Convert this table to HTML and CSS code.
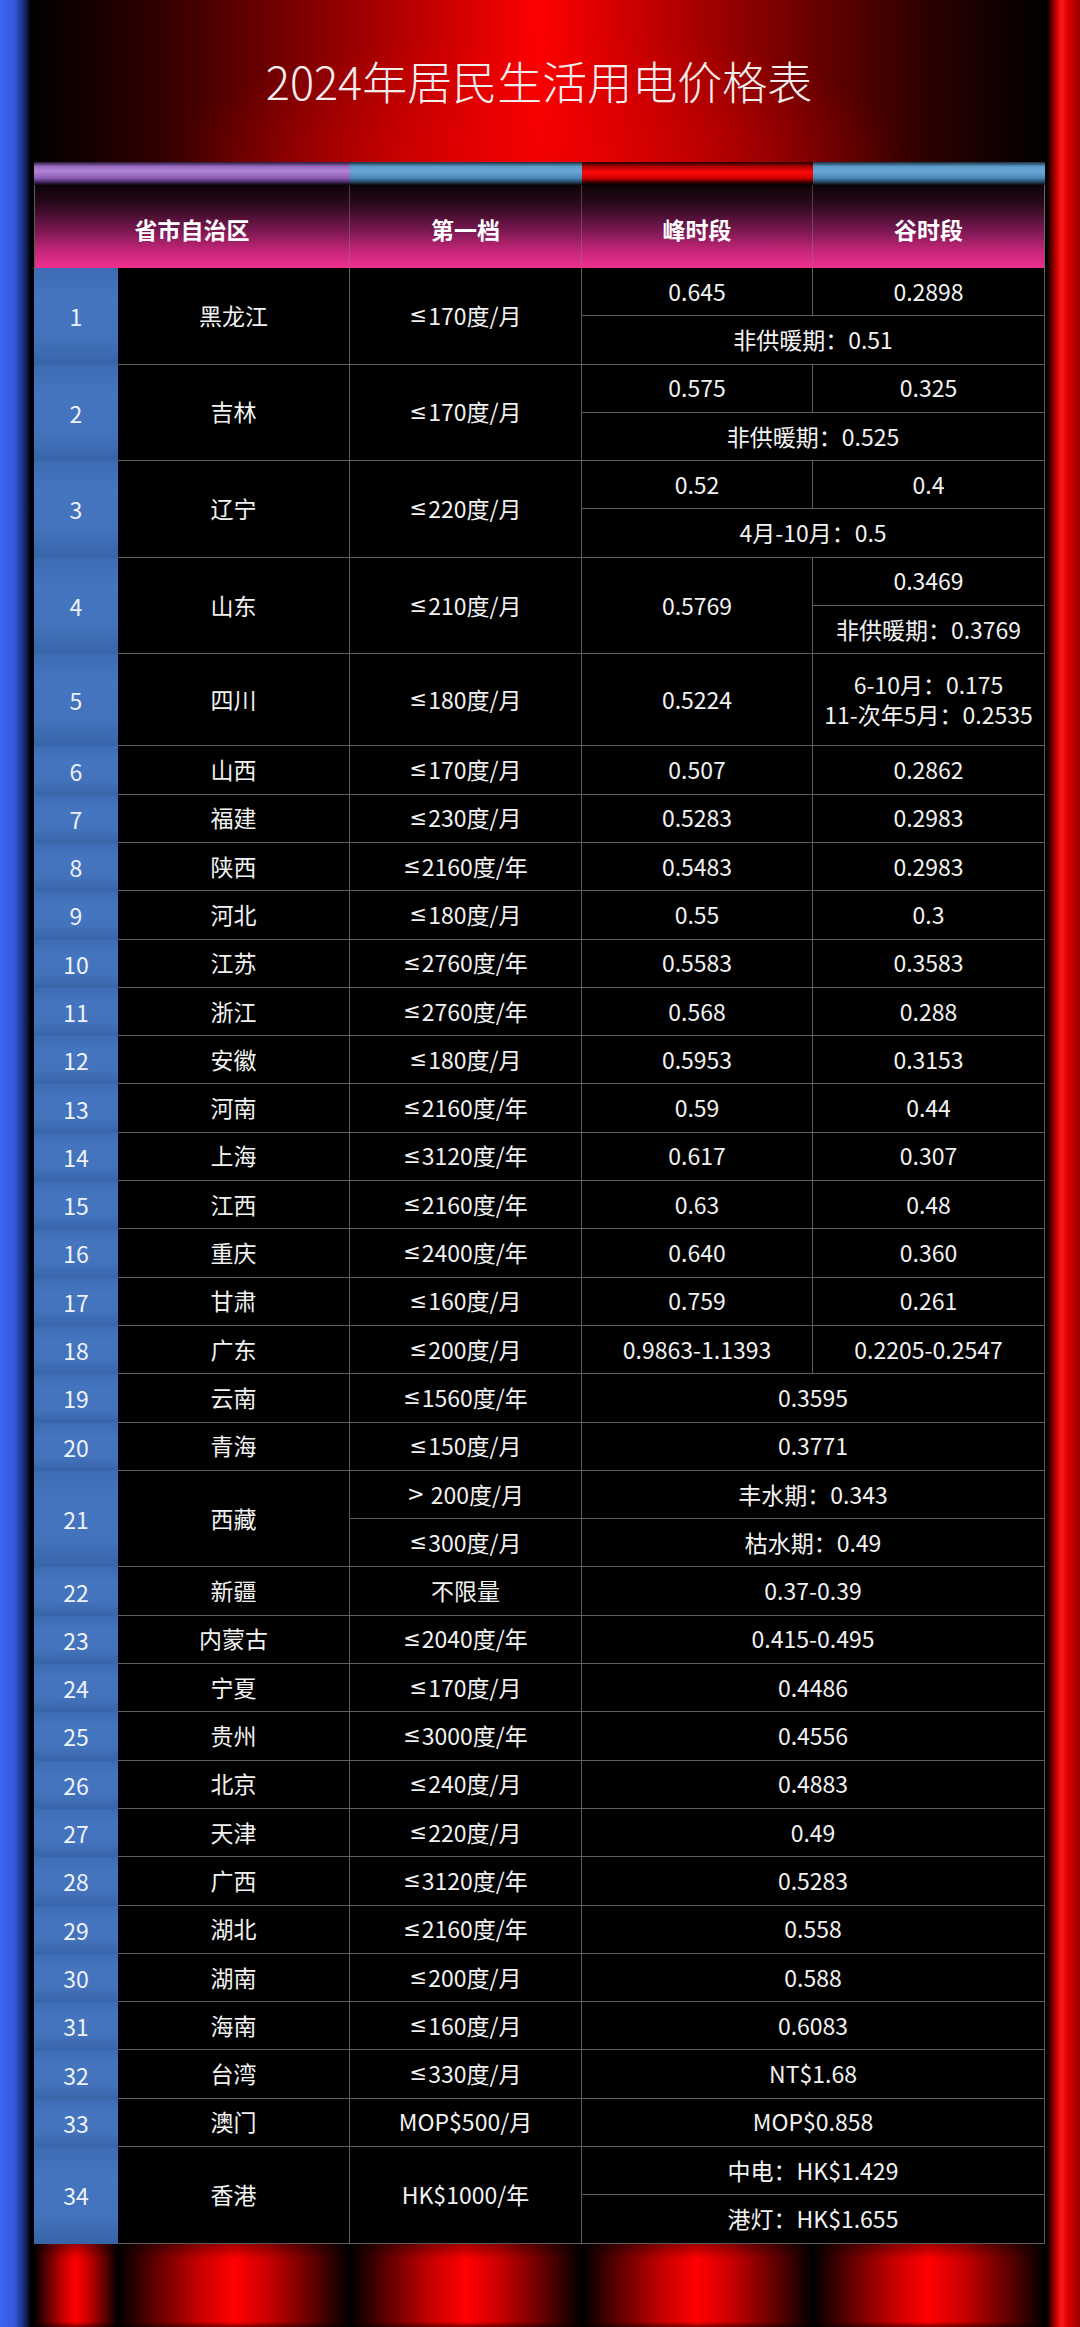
FILE: index.html
```html
<!DOCTYPE html>
<html lang="zh-CN">
<head>
<meta charset="utf-8">
<title>2024年居民生活用电价格表</title>
<link rel="stylesheet" href="styles.css">
</head>
<body>
<div class="page">
  <div class="bar-left"></div>
  <main class="content">
    <header class="title-area"><h1 class="title">2024年居民生活用电价格表</h1></header>
    <div class="band">
      <span class="seg seg-wide seg-purple"></span>
      <span class="seg seg-blue"></span>
      <span class="seg seg-red"></span>
      <span class="seg seg-blue"></span>
    </div>
    <div class="thead">
      <div class="th th-wide">省市自治区</div>
      <div class="th">第一档</div>
      <div class="th">峰时段</div>
      <div class="th th-last">谷时段</div>
    </div>
    <div class="grid">
      <div class="n r2">1</div><div class="c r2">黑龙江</div><div class="c r2"><span class="le">≤</span>170度/月</div><div class="c">0.645</div><div class="c">0.2898</div><div class="c s2">非供暖期：0.51</div>
      <div class="n r2">2</div><div class="c r2">吉林</div><div class="c r2"><span class="le">≤</span>170度/月</div><div class="c">0.575</div><div class="c">0.325</div><div class="c s2">非供暖期：0.525</div>
      <div class="n r2">3</div><div class="c r2">辽宁</div><div class="c r2"><span class="le">≤</span>220度/月</div><div class="c">0.52</div><div class="c">0.4</div><div class="c s2">4月-10月：0.5</div>
      <div class="n r2">4</div><div class="c r2">山东</div><div class="c r2"><span class="le">≤</span>210度/月</div><div class="c r2">0.5769</div><div class="c">0.3469</div><div class="c">非供暖期：0.3769</div>
      <div class="n">5</div><div class="c">四川</div><div class="c"><span class="le">≤</span>180度/月</div><div class="c">0.5224</div><div class="c">6-10月：0.175<br>11-次年5月：0.2535</div>
      <div class="n">6</div><div class="c">山西</div><div class="c"><span class="le">≤</span>170度/月</div><div class="c">0.507</div><div class="c">0.2862</div>
      <div class="n">7</div><div class="c">福建</div><div class="c"><span class="le">≤</span>230度/月</div><div class="c">0.5283</div><div class="c">0.2983</div>
      <div class="n">8</div><div class="c">陕西</div><div class="c"><span class="le">≤</span>2160度/年</div><div class="c">0.5483</div><div class="c">0.2983</div>
      <div class="n">9</div><div class="c">河北</div><div class="c"><span class="le">≤</span>180度/月</div><div class="c">0.55</div><div class="c">0.3</div>
      <div class="n">10</div><div class="c">江苏</div><div class="c"><span class="le">≤</span>2760度/年</div><div class="c">0.5583</div><div class="c">0.3583</div>
      <div class="n">11</div><div class="c">浙江</div><div class="c"><span class="le">≤</span>2760度/年</div><div class="c">0.568</div><div class="c">0.288</div>
      <div class="n">12</div><div class="c">安徽</div><div class="c"><span class="le">≤</span>180度/月</div><div class="c">0.5953</div><div class="c">0.3153</div>
      <div class="n">13</div><div class="c">河南</div><div class="c"><span class="le">≤</span>2160度/年</div><div class="c">0.59</div><div class="c">0.44</div>
      <div class="n">14</div><div class="c">上海</div><div class="c"><span class="le">≤</span>3120度/年</div><div class="c">0.617</div><div class="c">0.307</div>
      <div class="n">15</div><div class="c">江西</div><div class="c"><span class="le">≤</span>2160度/年</div><div class="c">0.63</div><div class="c">0.48</div>
      <div class="n">16</div><div class="c">重庆</div><div class="c"><span class="le">≤</span>2400度/年</div><div class="c">0.640</div><div class="c">0.360</div>
      <div class="n">17</div><div class="c">甘肃</div><div class="c"><span class="le">≤</span>160度/月</div><div class="c">0.759</div><div class="c">0.261</div>
      <div class="n">18</div><div class="c">广东</div><div class="c"><span class="le">≤</span>200度/月</div><div class="c">0.9863-1.1393</div><div class="c">0.2205-0.2547</div>
      <div class="n">19</div><div class="c">云南</div><div class="c"><span class="le">≤</span>1560度/年</div><div class="c s2">0.3595</div>
      <div class="n">20</div><div class="c">青海</div><div class="c"><span class="le">≤</span>150度/月</div><div class="c s2">0.3771</div>
      <div class="n r2">21</div><div class="c r2">西藏</div><div class="c"><span class="le">&gt;</span> 200度/月</div><div class="c s2">丰水期：0.343</div><div class="c"><span class="le">≤</span>300度/月</div><div class="c s2">枯水期：0.49</div>
      <div class="n">22</div><div class="c">新疆</div><div class="c">不限量</div><div class="c s2">0.37-0.39</div>
      <div class="n">23</div><div class="c">内蒙古</div><div class="c"><span class="le">≤</span>2040度/年</div><div class="c s2">0.415-0.495</div>
      <div class="n">24</div><div class="c">宁夏</div><div class="c"><span class="le">≤</span>170度/月</div><div class="c s2">0.4486</div>
      <div class="n">25</div><div class="c">贵州</div><div class="c"><span class="le">≤</span>3000度/年</div><div class="c s2">0.4556</div>
      <div class="n">26</div><div class="c">北京</div><div class="c"><span class="le">≤</span>240度/月</div><div class="c s2">0.4883</div>
      <div class="n">27</div><div class="c">天津</div><div class="c"><span class="le">≤</span>220度/月</div><div class="c s2">0.49</div>
      <div class="n">28</div><div class="c">广西</div><div class="c"><span class="le">≤</span>3120度/年</div><div class="c s2">0.5283</div>
      <div class="n">29</div><div class="c">湖北</div><div class="c"><span class="le">≤</span>2160度/年</div><div class="c s2">0.558</div>
      <div class="n">30</div><div class="c">湖南</div><div class="c"><span class="le">≤</span>200度/月</div><div class="c s2">0.588</div>
      <div class="n">31</div><div class="c">海南</div><div class="c"><span class="le">≤</span>160度/月</div><div class="c s2">0.6083</div>
      <div class="n">32</div><div class="c">台湾</div><div class="c"><span class="le">≤</span>330度/月</div><div class="c s2">NT$1.68</div>
      <div class="n">33</div><div class="c">澳门</div><div class="c">MOP$500/月</div><div class="c s2">MOP$0.858</div>
      <div class="n r2">34</div><div class="c r2">香港</div><div class="c r2">HK$1000/年</div><div class="c s2">中电：HK$1.429</div><div class="c s2">港灯：HK$1.655</div>
    </div>
    <div class="footer-band">
      <span class="fseg fseg-num"></span>
      <span class="fseg"></span>
      <span class="fseg"></span>
      <span class="fseg fseg-mid"></span>
      <span class="fseg"></span>
    </div>
  </main>
  <div class="bar-right"></div>
</div>
</body>
</html>
```
FILE: styles.css
```css
* {
  box-sizing: border-box;
}

html,
body {
  margin: 0;
  padding: 0;
  background: #000;
}

body {
  width: 1080px;
  height: 2327px;
  overflow: hidden;
  font-family: "Noto Sans CJK SC", "Noto Sans", sans-serif;
  color: #f2f2f2;
}

.page {
  display: flex;
  height: 2327px;
}

.bar-left {
  width: 31px;
  flex: none;
  background: linear-gradient(90deg, #3d66f2 0%, #3659dc 45%, #1e3590 72%, #06102e 92%, #000 100%);
}

.bar-right {
  width: 33px;
  flex: none;
  background: linear-gradient(90deg, #000 0%, #4a0000 10%, #d40000 30%, #ff1a1a 45%, #e00000 62%, #b30000 85%, #9a0000 100%);
}

.content {
  flex: 1;
  min-width: 0;
  display: flex;
  flex-direction: column;
}

.title-area {
  height: 162px;
  flex: none;
  display: flex;
  align-items: center;
  justify-content: center;
  padding-bottom: 2px;
  background:
    radial-gradient(ellipse 48% 110% at 50% 100%, rgba(235, 0, 0, 0.6), rgba(235, 0, 0, 0) 75%),
    linear-gradient(90deg, #000 0%, #2e0000 12%, #9a0000 32%, #ff0000 50%, #9a0000 68%, #2e0000 88%, #000 100%);
}

.title {
  margin: 0;
  font-family: "Noto Sans CJK SC Light", "Noto Sans CJK SC", sans-serif;
  font-weight: 300;
  font-size: 45px;
  letter-spacing: 0;
  color: #f6eeee;
  line-height: 1;
}

.band,
.thead,
.grid,
.footer-band {
  margin: 0 2px 0 3px;
}

.band {
  display: flex;
  height: 23px;
  flex: none;
}

.seg {
  width: 232px;
  flex: none;
}

.seg-wide {
  width: 316px;
}

.seg-red {
  width: 231px;
}

.seg-purple {
  background: linear-gradient(to bottom, #2a1838 0%, #9a6cc4 20%, #b084d6 40%, #8c5cb4 70%, #3a2050 90%, #0a0510 100%);
}

.seg-blue {
  background: linear-gradient(to bottom, #1a3040 0%, #5d9ccc 20%, #6aa6d6 40%, #4a88b8 70%, #1e3a50 90%, #05080c 100%);
}

.seg-red {
  background: linear-gradient(to bottom, #200000 0%, #b00000 20%, #ff0a0a 45%, #d00000 70%, #300000 90%, #000 100%);
}

.thead {
  display: flex;
  height: 83px;
  flex: none;
  background: linear-gradient(to bottom, #0c0206 0%, #2e0a20 25%, #7a1852 55%, #c8267a 80%, #ef2e8e 100%);
  border-left: 1px solid #5a5a5a;
}

.th {
  width: 232px;
  flex: none;
  display: flex;
  align-items: center;
  justify-content: center;
  padding-top: 4px;
  font-size: 23px;
  font-weight: 700;
  color: #fff;
  border-right: 1px solid rgba(130, 130, 130, 0.45);
}

.th-wide {
  width: 315px;
}

.th:nth-child(3) {
  width: 231px;
}

.th-last {
  border-right: 1px solid #6a6a6a;
}

.grid {
  display: grid;
  grid-template-columns: 84px 232px 232px 231px 232px;
  grid-template-rows: repeat(8, 48.3px) 92px;
  grid-auto-rows: 48.3px;
  flex: none;
}

.c {
  display: flex;
  align-items: center;
  justify-content: center;
  text-align: center;
  font-size: 23px;
  line-height: 1.3;
  color: #f2f2f2;
  border-right: 1px solid #5e5e5e;
  border-bottom: 1px solid #5e5e5e;
  white-space: pre;
}

.le {
  font-family: "DejaVu Sans", "Noto Sans", sans-serif;
  font-size: 21px;
  margin-right: 1px;
}

.n {
  display: flex;
  align-items: center;
  justify-content: center;
  font-size: 23px;
  color: #eef2fa;
  background: linear-gradient(to bottom, #3d6bb4 0%, #4675c0 30%, #4473bd 70%, #3864a8 100%);
}

.r2 {
  grid-row: span 2;
}

.s2 {
  grid-column: span 2;
}

.footer-band {
  flex: 1;
  display: flex;
}

.fseg {
  width: 232px;
  flex: none;
  background:
    linear-gradient(to bottom, rgba(0, 0, 0, 0.35) 0%, rgba(0, 0, 0, 0) 18%, rgba(0, 0, 0, 0) 94%, rgba(0, 0, 0, 0.5) 100%),
    linear-gradient(90deg, #000 0%, #5a0000 15%, #c80000 35%, #ff0000 50%, #c80000 65%, #5a0000 85%, #000 100%);
}

.fseg-num {
  width: 84px;
}

.fseg-mid {
  width: 231px;
}
```
